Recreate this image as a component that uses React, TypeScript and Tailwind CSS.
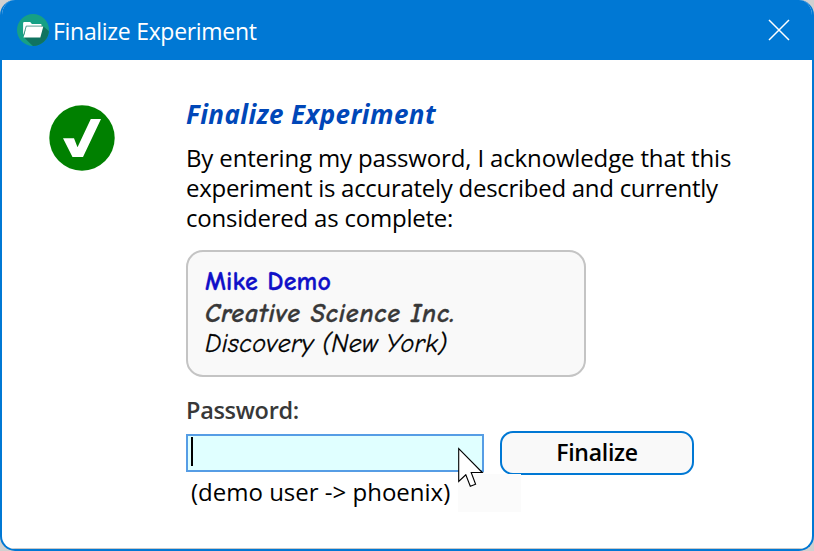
function FolderIcon() {
  return (
    <svg width="34" height="34" viewBox="0 0 34 34" className="shrink-0">
      <defs>
        <clipPath id="disc">
          <circle cx="17" cy="17" r="16" />
        </clipPath>
      </defs>
      <circle cx="17" cy="17" r="16" fill="#16a085" />
      <path d="M8 24.500L27 13L36 21V36H20z" fill="#107360" clipPath="url(#disc)" />
      <g transform="translate(0.600 0)">
        <path d="M6.500 22.500V10.300q0-1.300 1.300-1.300H13.600l1.700 2H24q1 0 1 1v2H10.300z" fill="#fff" />
        <path d="M9.900 13.600H26.700L23.700 24.600H6.900z" fill="#fff" />
        <path d="M7 22.300L9.600 13.100H25.500" fill="none" stroke="#107360" strokeWidth=".7" />
      </g>
    </svg>
  );
}

function CheckBadge() {
  return (
    <svg width="66" height="66" viewBox="0 0 66 66">
      <circle cx="33" cy="33" r="32.700" fill="#008000" />
      <path d="M14 33.300H25L28.500 42.300L41.800 14H52L34 52H23.500z" fill="#fff" />
    </svg>
  );
}

function Pointer() {
  return (
    <svg width="28" height="42" viewBox="0 0 28 42" className="absolute left-[458px] top-[447px]">
      <path d="M.7 1.700V34.500L7.800 27.800L12.300 39.200L17.600 37.200L13.200 25.500H24.300z" fill="#fff" stroke="#000" strokeWidth="1.100" />
    </svg>
  );
}

export default function App() {
  return (
    <div className="relative h-[551px] w-[814px] overflow-hidden bg-[#d0d0d0] font-['Segoe_UI','Open_Sans',sans-serif] text-black">
      <div className="flex h-full flex-col overflow-hidden rounded-[15px] border-2 border-t-0 border-[#0078d4] bg-white">
        <header className="flex h-[60px] shrink-0 items-center justify-between bg-[#0078d4] pl-[14px] pr-[22px] text-white">
          <div className="flex items-center gap-[3px]">
            <FolderIcon />
            <h1 className="whitespace-nowrap pt-[2px] text-[23px] leading-[30px] tracking-[-0.3px]">Finalize Experiment</h1>
          </div>
          <svg width="22" height="22" viewBox="0 0 22 22" stroke="#fff" strokeWidth="1.500">
            <path d="M1 1L21 21M21 1L1 21" />
          </svg>
        </header>
        <main className="flex grow items-start border-b border-[#c8c8c8] pl-[47px] pt-[38px]">
          <div className="mt-[7px] w-[137px] shrink-0">
            <CheckBadge />
          </div>
          <div className="whitespace-nowrap">
            <h2 className="text-[26px] font-bold italic leading-[32px] tracking-[0.42px] text-[#0047b8]">Finalize Experiment</h2>
            <div className="mt-[13px] text-[24px] leading-[30px]">
              <p className="tracking-[-0.15px]">By entering my password, I acknowledge that this</p>
              <p className="tracking-[-0.28px]">experiment is accurately described and currently</p>
              <p className="tracking-[-0.22px]">considered as complete:</p>
            </div>
            <div className="mt-[17px] h-[127px] w-[400px] rounded-[17px] border-2 border-[#c4c4c4] bg-[#f9f9f9] pl-[17px] pt-[14px] font-['Comic_Sans_MS','Comic_Neue',cursive] text-[26px] [-webkit-text-stroke:0.3px]">
              <p className="font-bold leading-[33px] tracking-[0.15px] text-[#1010c8]">Mike Demo</p>
              <p className="font-bold italic leading-[31px] tracking-[0.75px] text-[#383838]">Creative Science Inc.</p>
              <p className="italic leading-[28px] tracking-[0.4px] [word-spacing:-1px]">Discovery (New York)</p>
            </div>
            <label className="mt-[18px] block text-[23.500px] font-semibold leading-[30px] tracking-[-0.3px] text-[#383838]">Password:</label>
            <div className="mt-[6px] flex gap-[16px]">
              <div className="mt-[3px] h-[38px] w-[298px] border-2 border-[#569de5] bg-[#e0ffff] pl-[3px] pt-[1px]">
                <div className="h-[29px] w-[2px] bg-black" />
              </div>
              <button className="flex h-[44px] w-[194px] justify-center rounded-[13px] border-2 border-[#0078d4] bg-[#f9f9f9] text-[23px] font-semibold leading-[38px] tracking-[-0.25px]">Finalize</button>
            </div>
            <div className="flex pl-[5px]">
              <p className="w-[267px] text-[24px] leading-[33px]">(demo user -&gt; phoenix)</p>
              <div className="mt-[-1px] h-[38px] w-[63px] bg-[#fbfbfb]" />
            </div>
          </div>
        </main>
      </div>
      <Pointer />
    </div>
  );
}
